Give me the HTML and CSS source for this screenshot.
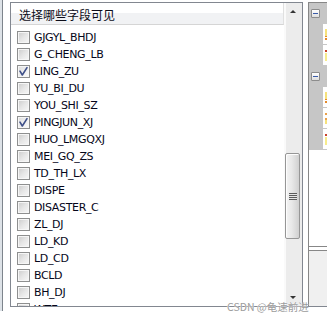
FILE: index.html
```html
<!DOCTYPE html>
<html>
<head>
<meta charset="utf-8">
<link rel="stylesheet" href="styles.css">
</head>
<body>
<div class="frame">
  <div class="edge"></div>
  <div class="listbox">
    <div class="content">
      <div class="header">选择哪些字段可见</div>
      <div class="rows">
        <div class="row"><span class="cb"></span><span>GJGYL_BHDJ</span></div>
        <div class="row"><span class="cb"></span><span>G_CHENG_LB</span></div>
        <div class="row"><span class="cb checked"><svg width="13" height="13" viewBox="0 0 13 13"><path d="M3 6.2 L5.3 10 L10 2.6" fill="none" stroke="#3f5089" stroke-width="1.6" stroke-linejoin="round" stroke-linecap="round"/></svg></span><span>LING_ZU</span></div>
        <div class="row"><span class="cb"></span><span>YU_BI_DU</span></div>
        <div class="row"><span class="cb"></span><span>YOU_SHI_SZ</span></div>
        <div class="row"><span class="cb checked"><svg width="13" height="13" viewBox="0 0 13 13"><path d="M3 6.2 L5.3 10 L10 2.6" fill="none" stroke="#3f5089" stroke-width="1.6" stroke-linejoin="round" stroke-linecap="round"/></svg></span><span>PINGJUN_XJ</span></div>
        <div class="row"><span class="cb"></span><span>HUO_LMGQXJ</span></div>
        <div class="row"><span class="cb"></span><span>MEI_GQ_ZS</span></div>
        <div class="row"><span class="cb"></span><span>TD_TH_LX</span></div>
        <div class="row"><span class="cb"></span><span>DISPE</span></div>
        <div class="row"><span class="cb"></span><span>DISASTER_C</span></div>
        <div class="row"><span class="cb"></span><span>ZL_DJ</span></div>
        <div class="row"><span class="cb"></span><span>LD_KD</span></div>
        <div class="row"><span class="cb"></span><span>LD_CD</span></div>
        <div class="row"><span class="cb"></span><span>BCLD</span></div>
        <div class="row"><span class="cb"></span><span>BH_DJ</span></div>
        <div class="row"><span class="cb"></span><span>WTE</span></div>
      </div>
    </div>
    <div class="scroll">
      <div class="btn"><span class="arrow-up"></span></div>
      <div class="track-top"></div>
      <div class="thumb"><span class="grip"></span></div>
      <div class="track-fill"></div>
      <div class="btn"><span class="arrow-down"></span></div>
    </div>
  </div>
  <div class="side">
    <div class="panel">
      <div class="grp">
        <div class="grp-head"><span class="minus"></span><span class="cut-text"></span></div>
        <div class="cell"><span class="ico ico-a"></span></div>
        <div class="cell"><span class="ico ico-b"></span></div>
        <div class="grp-head"><span class="minus"></span><span class="cut-text"></span></div>
        <div class="cell"><span class="ico ico-a"></span></div>
        <div class="cell"><span class="ico ico-c"></span></div>
        <div class="cell"><span class="ico ico-b"></span></div>
      </div>
      <div class="blank"></div>
      <div class="lower"></div>
    </div>
  </div>
</div>
<div class="watermark">CSDN @龟速前进</div>
</body>
</html>
```
FILE: styles.css
```css
body {
  margin: 0;
  width: 327px;
  height: 322px;
  overflow: hidden;
  background: #ffffff;
  position: relative;
  font-family: "DejaVu Sans", sans-serif;
}

.frame {
  display: flex;
  align-items: flex-start;
}

.edge {
  width: 2px;
  height: 311px;
  background: #dde2e7;
  border-right: 1px solid #7d848c;
}

.listbox {
  margin-left: 7px;
  margin-top: 2px;
  width: 293px;
  height: 305px;
  box-sizing: border-box;
  border: 1px solid #828790;
  display: flex;
}

.content {
  width: 273px;
  overflow: hidden;
  display: flex;
  flex-direction: column;
}

.header {
  height: 21px;
  flex: none;
  border-bottom: 1px solid #d5d5d5;
  border-right: 1px solid #e0e0e0;
  background: linear-gradient(#ffffff 0, #ffffff 47%, #f1f2f4 50%, #f1f2f4 100%);
  padding-left: 8px;
  font-family: "Noto Sans CJK SC", sans-serif;
  font-size: 12px;
  line-height: 23px;
  color: #0c0c18;
}

.rows {
  padding-top: 4px;
}

.row {
  height: 17px;
  display: flex;
  align-items: center;
  gap: 4px;
  padding-left: 6px;
  font-size: 11px;
  letter-spacing: -0.35px;
  color: #06061a;
  white-space: nowrap;
}

.cb {
  width: 13px;
  height: 13px;
  box-sizing: border-box;
  flex: none;
  border: 1px solid #8e8f8f;
  box-shadow: inset 0 0 0 1px #f6f6f6;
  background: linear-gradient(135deg, #cbcbcb 0%, #e6e6e6 50%, #f8f8f8 100%);
  position: relative;
}

.cb.checked {
  background: linear-gradient(135deg, #dcdcdc 0%, #eeeeee 50%, #fbfbfb 100%);
}

.cb svg {
  position: absolute;
  left: -1px;
  top: -1px;
}

.scroll {
  width: 18px;
  display: flex;
  flex-direction: column;
  background: linear-gradient(to right, #fafafa 0, #fafafa 2px, #ececec 2px, #ececec 100%);
}

.btn {
  height: 17px;
  flex: none;
  display: flex;
  align-items: center;
  justify-content: center;
}

.arrow-up {
  width: 0;
  height: 0;
  border-left: 3px solid transparent;
  border-right: 3px solid transparent;
  border-bottom: 3px solid #333333;
}

.arrow-down {
  width: 0;
  height: 0;
  border-left: 3px solid transparent;
  border-right: 3px solid transparent;
  border-top: 3px solid #333333;
}

.track-top {
  height: 133px;
  flex: none;
}

.track-fill {
  flex: 1;
}

.thumb {
  height: 86px;
  flex: none;
  margin: 0 2px 0 1px;
  box-sizing: border-box;
  border: 1px solid #969696;
  border-radius: 2px;
  background: linear-gradient(to right, #f4f4f4 0%, #e8e8e8 45%, #d0d0d0 100%);
  box-shadow: inset 1px 1px 0 #fdfdfd;
  display: flex;
  align-items: center;
  justify-content: center;
}

.grip {
  width: 8px;
  height: 7px;
  background: repeating-linear-gradient(#5c5c5c 0, #5c5c5c 1px, #e6e6e6 1px, #e6e6e6 2px);
}

.side {
  margin-top: 2px;
  width: 24px;
  height: 305px;
  box-sizing: border-box;
  border-bottom: 1px solid #828790;
  padding-left: 5px;
  display: flex;
}

.panel {
  flex: 1;
  border-left: 1px solid #878787;
  border-top: 1px solid #878787;
  display: flex;
  flex-direction: column;
}

.grp {
  background: #c6c6c6;
  padding-bottom: 1px;
}

.grp-head {
  height: 21px;
  display: flex;
  align-items: flex-start;
  padding-top: 6px;
  padding-left: 2px;
  box-sizing: border-box;
  gap: 5px;
}

.minus {
  width: 9px;
  height: 9px;
  box-sizing: border-box;
  border: 1px solid #8c8c8c;
  border-radius: 1px;
  background: linear-gradient(#ffffff, #dedede);
  display: flex;
  align-items: center;
  justify-content: center;
}

.minus::after {
  content: "";
  width: 5px;
  height: 1px;
  background: #3a5ba8;
}

.cut-text {
  width: 2px;
  height: 7px;
  margin-top: 1px;
  margin-left: 2px;
  background: #b59a6e;
}

.cell {
  height: 20px;
  margin-left: 14px;
  margin-bottom: 1px;
  background: #ffffff;
  display: flex;
  align-items: center;
  padding-left: 2px;
}

.cell:last-child {
  margin-bottom: 0;
}

.ico {
  width: 3px;
  height: 11px;
}

.ico-a {
  background: linear-gradient(#f6e27c 0, #f6e27c 60%, #e58a2a 60%, #e58a2a 75%, #ffffff 75%, #ffffff 85%, #e58a2a 85%);
}

.ico-b {
  background: linear-gradient(#c9432a 0, #c9432a 15%, #ffffff 15%, #ffffff 30%, #f7ec8c 30%, #f7ec8c 100%);
}

.ico-c {
  background: linear-gradient(#e9a04a 0, #e9a04a 20%, #ffffff 20%, #ffffff 45%, #e9a04a 45%, #e9a04a 65%, #f6e27c 65%);
}

.blank {
  height: 96px;
  flex: none;
  border-bottom: 1px solid #878787;
}

.lower {
  flex: 1;
  margin-top: 3px;
  border-top: 1px solid #878787;
  background: #f0f0f0;
}

.watermark {
  position: absolute;
  left: 227px;
  top: 300px;
  font-family: "Noto Sans CJK SC", sans-serif;
  font-size: 10.5px;
  line-height: 14px;
  color: #9c9c9c;
  text-shadow: 0 0 1px #ffffff, 0 0 1px #ffffff;
  white-space: nowrap;
}
```
